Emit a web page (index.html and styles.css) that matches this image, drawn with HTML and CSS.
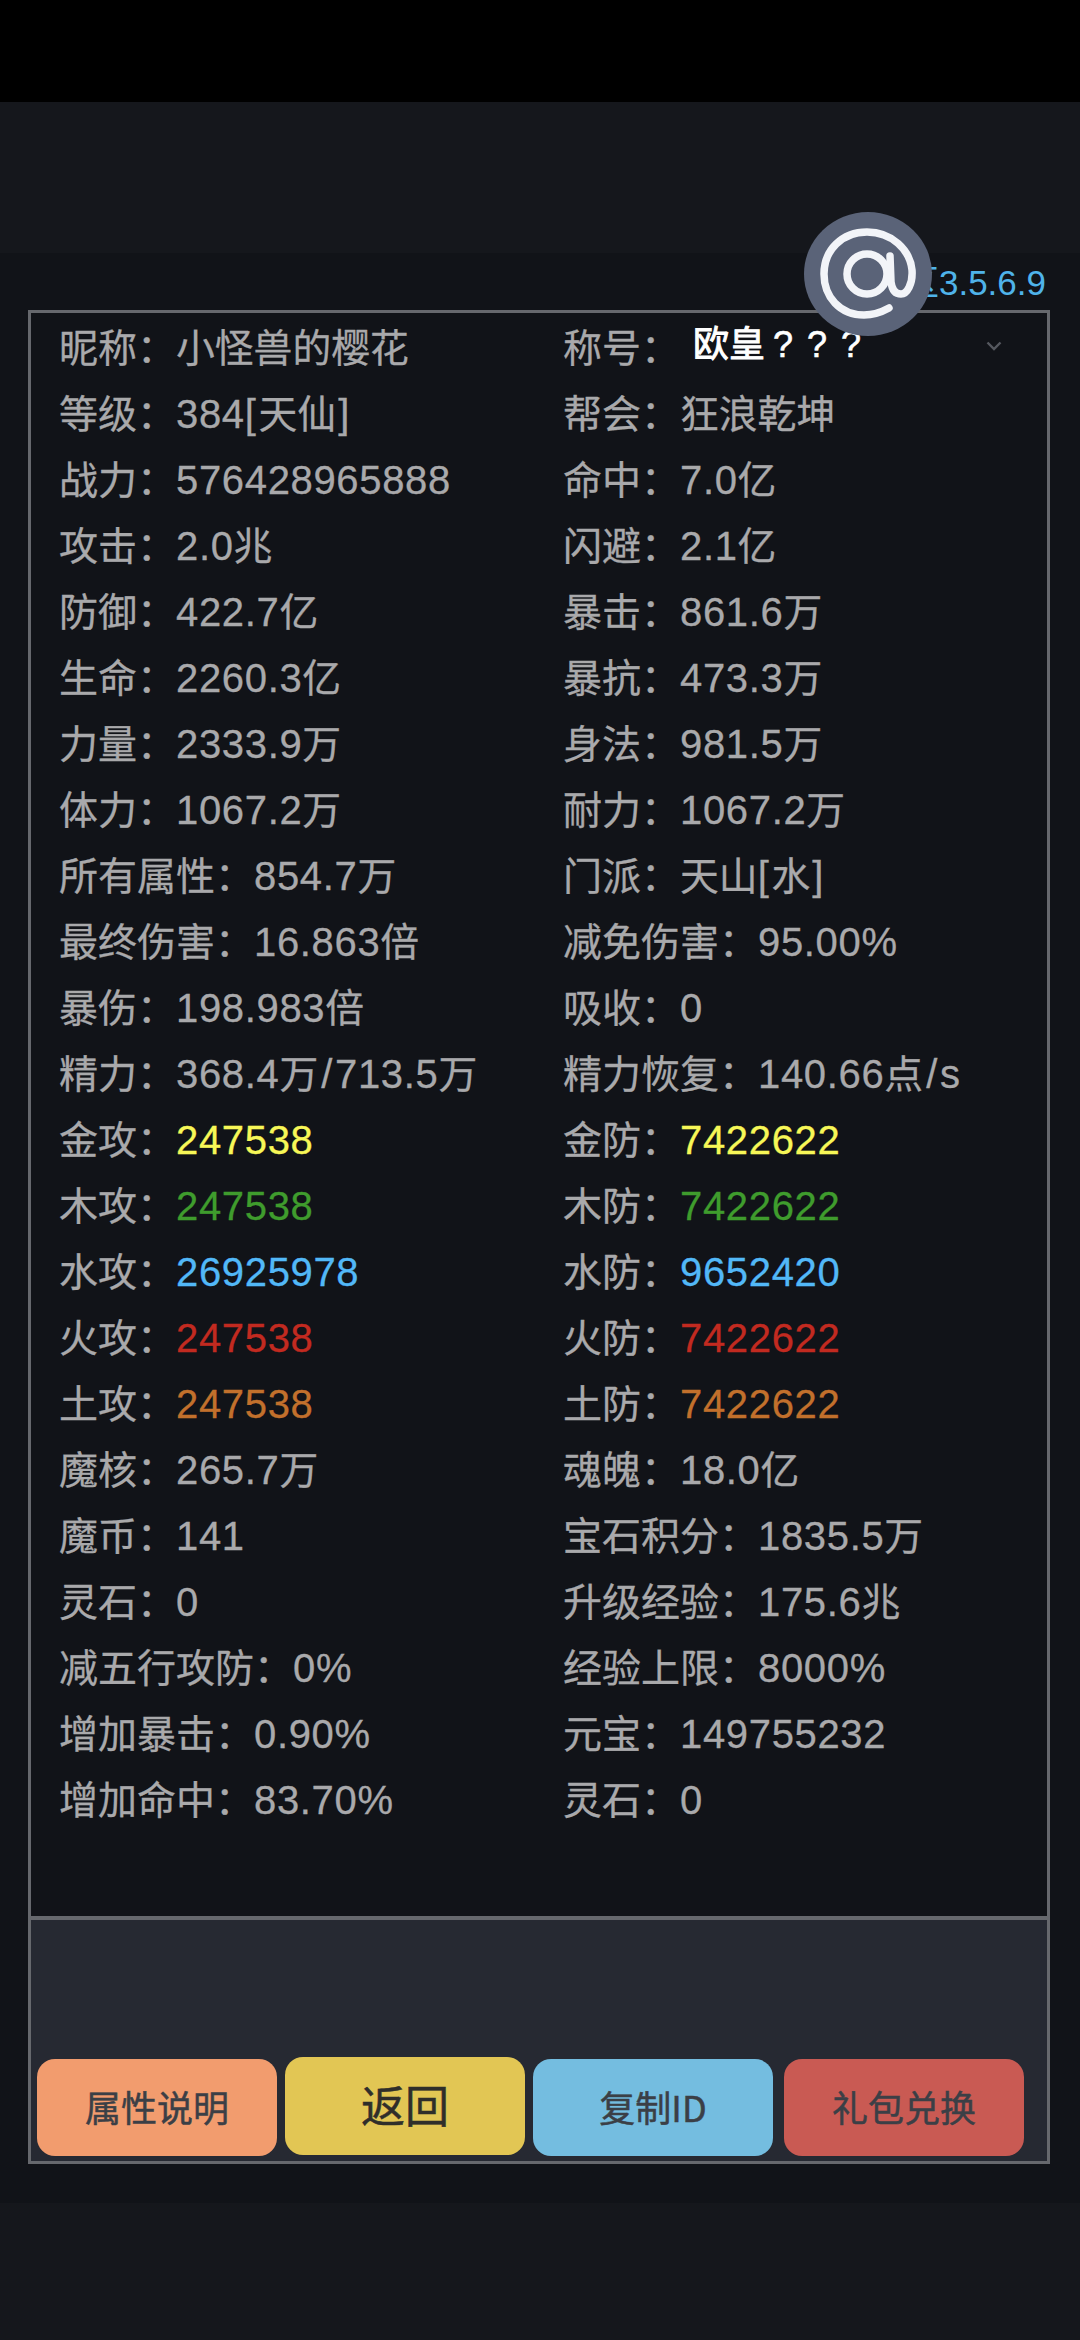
FILE: index.html
```html
<!DOCTYPE html>
<html lang="zh">
<head>
<meta charset="utf-8">
<title>属性</title>
<link rel="stylesheet" href="styles.css">
</head>
<body>
<div class="statusbar"></div>
<div class="topband"></div>
<main class="screen">
  <div class="version">区3.5.6.9</div>
  <section class="panel">
    <div class="stats">
      <div class="stat"><span class="k">昵称：</span><span class="u">小怪兽的樱花</span></div>
      <div class="stat title-stat"><span class="k">称号：</span><span class="title-val">欧皇<span class="q">???</span></span>
        <svg class="chev" viewBox="0 0 16 10" width="16" height="10"><path d="M1.5 1.5 8 8 14.5 1.5" fill="none" stroke="#55585f" stroke-width="2.4"/></svg>
      </div>
      <div class="stat"><span class="k">等级：</span><span class="v">384[<span class="u bk">天仙</span>]</span></div>
      <div class="stat"><span class="k">帮会：</span><span class="u">狂浪乾坤</span></div>
      <div class="stat"><span class="k">战力：</span><span class="v">576428965888</span></div>
      <div class="stat"><span class="k">命中：</span><span class="v">7.0<span class="u">亿</span></span></div>
      <div class="stat"><span class="k">攻击：</span><span class="v">2.0<span class="u">兆</span></span></div>
      <div class="stat"><span class="k">闪避：</span><span class="v">2.1<span class="u">亿</span></span></div>
      <div class="stat"><span class="k">防御：</span><span class="v">422.7<span class="u">亿</span></span></div>
      <div class="stat"><span class="k">暴击：</span><span class="v">861.6<span class="u">万</span></span></div>
      <div class="stat"><span class="k">生命：</span><span class="v">2260.3<span class="u">亿</span></span></div>
      <div class="stat"><span class="k">暴抗：</span><span class="v">473.3<span class="u">万</span></span></div>
      <div class="stat"><span class="k">力量：</span><span class="v">2333.9<span class="u">万</span></span></div>
      <div class="stat"><span class="k">身法：</span><span class="v">981.5<span class="u">万</span></span></div>
      <div class="stat"><span class="k">体力：</span><span class="v">1067.2<span class="u">万</span></span></div>
      <div class="stat"><span class="k">耐力：</span><span class="v">1067.2<span class="u">万</span></span></div>
      <div class="stat"><span class="k">所有属性：</span><span class="v">854.7<span class="u">万</span></span></div>
      <div class="stat"><span class="k">门派：</span><span class="v"><span class="u">天山</span>[<span class="u bk">水</span>]</span></div>
      <div class="stat"><span class="k">最终伤害：</span><span class="v">16.863<span class="u">倍</span></span></div>
      <div class="stat"><span class="k">减免伤害：</span><span class="v">95.00%</span></div>
      <div class="stat"><span class="k">暴伤：</span><span class="v">198.983<span class="u">倍</span></span></div>
      <div class="stat"><span class="k">吸收：</span><span class="v">0</span></div>
      <div class="stat"><span class="k">精力：</span><span class="v">368.4<span class="u">万</span><span class="sl">/</span>713.5<span class="u">万</span></span></div>
      <div class="stat"><span class="k">精力恢复：</span><span class="v">140.66<span class="u">点</span><span class="sl">/</span>s</span></div>
      <div class="stat"><span class="k">金攻：</span><span class="v gold">247538</span></div>
      <div class="stat"><span class="k">金防：</span><span class="v gold">7422622</span></div>
      <div class="stat"><span class="k">木攻：</span><span class="v wood">247538</span></div>
      <div class="stat"><span class="k">木防：</span><span class="v wood">7422622</span></div>
      <div class="stat"><span class="k">水攻：</span><span class="v water">26925978</span></div>
      <div class="stat"><span class="k">水防：</span><span class="v water">9652420</span></div>
      <div class="stat"><span class="k">火攻：</span><span class="v fire">247538</span></div>
      <div class="stat"><span class="k">火防：</span><span class="v fire">7422622</span></div>
      <div class="stat"><span class="k">土攻：</span><span class="v earth">247538</span></div>
      <div class="stat"><span class="k">土防：</span><span class="v earth">7422622</span></div>
      <div class="stat"><span class="k">魔核：</span><span class="v">265.7<span class="u">万</span></span></div>
      <div class="stat"><span class="k">魂魄：</span><span class="v">18.0<span class="u">亿</span></span></div>
      <div class="stat"><span class="k">魔币：</span><span class="v">141</span></div>
      <div class="stat"><span class="k">宝石积分：</span><span class="v">1835.5<span class="u">万</span></span></div>
      <div class="stat"><span class="k">灵石：</span><span class="v">0</span></div>
      <div class="stat"><span class="k">升级经验：</span><span class="v">175.6<span class="u">兆</span></span></div>
      <div class="stat"><span class="k">减五行攻防：</span><span class="v">0%</span></div>
      <div class="stat"><span class="k">经验上限：</span><span class="v">8000%</span></div>
      <div class="stat"><span class="k">增加暴击：</span><span class="v">0.90%</span></div>
      <div class="stat"><span class="k">元宝：</span><span class="v">149755232</span></div>
      <div class="stat"><span class="k">增加命中：</span><span class="v">83.70%</span></div>
      <div class="stat"><span class="k">灵石：</span><span class="v">0</span></div>
    </div>
    <div class="actions">
      <button class="btn orange">属性说明</button>
      <button class="btn yellow">返回</button>
      <button class="btn blue">复制ID</button>
      <button class="btn red">礼包兑换</button>
    </div>
  </section>
</main>
<div class="bottomband"></div>
<div class="float-at">
  <svg viewBox="0 0 128 124" width="128" height="124"><g fill="none" stroke="#f2f4f8" stroke-width="7.5" stroke-linecap="round" stroke-linejoin="round"><circle cx="63" cy="62" r="20"/><path d="M85 96C76 101 68 103 60 103 36 103 20 85 20 62 20 38 38 20 63 20 88 20 106 38 108 58 109 72 103 82 97 82 91 82 88 78 87 70L86 44"/></g></svg>
</div>
</body>
</html>
```
FILE: styles.css
```css
* { box-sizing: border-box; }
html, body { margin: 0; padding: 0; }
body {
  width: 1080px;
  height: 2340px;
  background: #111318;
  font-family: "Liberation Sans", "Noto Sans CJK SC", sans-serif;
  position: relative;
  overflow: hidden;
}
.statusbar { height: 102px; background: #000; }
.topband { height: 151px; background: #15171c; }
.screen { padding: 0 28px; }
.version {
  height: 57px;
  padding: 10px 6px 0 0;
  text-align: right;
  color: #4fb3ea;
  font-size: 35px;
  line-height: 40px;
  white-space: nowrap;
}
.panel {
  width: 1022px;
  height: 1854px;
  border: 3px solid #66686d;
  display: flex;
  flex-direction: column;
}
.stats {
  height: 1607px;
  background: #111318;
  padding: 2px 0 0 28px;
  display: grid;
  grid-template-columns: 504px 1fr;
  grid-auto-rows: 66px;
  align-content: start;
  border-bottom: 4px solid #66686d;
}
.stat {
  font-size: 40px;
  line-height: 66px;
  color: #a9a9ab;
  white-space: nowrap;
  -webkit-text-stroke: 0.3px currentColor;
}
.k { font-size: 39px; }
.v { letter-spacing: 0.66px; }
.u { font-size: 38.8px; letter-spacing: 0; }
.bk { margin: 0 2px; }
.sl { margin: 0 2px 0 3px; }
.title-stat { position: relative; }
.title-val {
  color: #fff;
  font-size: 36px;
  margin-left: 13px;
  position: relative;
  top: -5px;
  -webkit-text-stroke: 0.9px #fff;
}
.q {
  margin-left: 8px;
  font-size: 36px;
  letter-spacing: 14px;
  -webkit-text-stroke: 0.6px #fff;
}
.chev { position: absolute; left: 423px; top: 26px; }
.gold { color: #f7f757; }
.wood { color: #3f9c2d; }
.water { color: #52b8f7; }
.fire { color: #c22a20; }
.earth { color: #c2702c; }
.actions {
  flex: 1;
  background: #262932;
  display: flex;
  align-items: flex-end;
  padding: 0 0 5px 6px;
  gap: 8px;
}
.btn {
  flex: none;
  width: 240px;
  height: 97px;
  border: 0;
  border-radius: 18px;
  font-family: "Noto Sans CJK SC", "Liberation Sans", sans-serif;
  font-size: 36px;
  color: #3b3f46;
  padding: 0 0 4px;
  -webkit-text-stroke: 0.5px currentColor;
}
.orange { background: #f29c6e; }
.yellow { background: #e2c654; color: #2f2e2a; font-size: 44px; margin-bottom: 1px; height: 98px; }
.blue { background: #74bde0; }
.red { background: #c95a53; margin-left: 3px; }
.bottomband { margin-top: 39px; height: 138px; background: #15171c; }
.float-at {
  position: absolute;
  left: 804px;
  top: 212px;
  width: 128px;
  height: 124px;
  border-radius: 50%;
  background: #5a6378;
}
```
